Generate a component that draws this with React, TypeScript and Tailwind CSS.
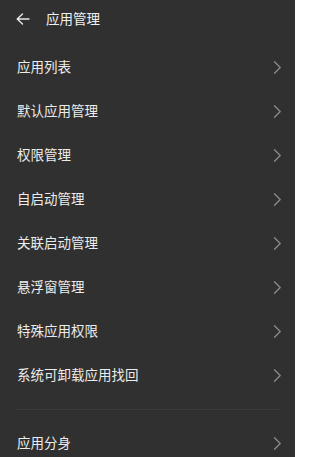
import React from "react";

const items1 = [
  "应用列表",
  "默认应用管理",
  "权限管理",
  "自启动管理",
  "关联启动管理",
  "悬浮窗管理",
  "特殊应用权限",
  "系统可卸载应用找回",
];

function Chevron() {
  return (
    <svg width="9" height="13" viewBox="0 0 9 13" fill="none">
      <path d="M1.5 0.8 L7.2 6.5 L1.5 12.2" stroke="#8a8a8a" strokeWidth="1.3" strokeLinecap="round" strokeLinejoin="round" />
    </svg>
  );
}

function Row({ label }: { label: string }) {
  return (
    <div className="flex h-[44px] items-center justify-between pl-[17px] pr-[13px]">
      <span className="text-[13.5px] leading-none text-[#ececec]">{label}</span>
      <Chevron />
    </div>
  );
}

export default function App() {
  return (
    <div
      className="h-[457px] w-[295px] overflow-hidden bg-[#303030]"
      style={{ fontFamily: '"Noto Sans CJK SC", "Noto Sans", sans-serif' }}
    >
      <div className="flex h-[38px] items-center pl-[16px]">
        <svg width="14" height="12" viewBox="0 0 14 12" fill="none">
          <path d="M13 6 H1.5 M6.5 1 L1.2 6 L6.5 11" stroke="#e8e8e8" strokeWidth="1.4" strokeLinecap="round" strokeLinejoin="round" />
        </svg>
        <span className="ml-[16px] text-[13.5px] leading-none text-[#f0f0f0]">应用管理</span>
      </div>
      <div className="pt-[7px]">
        {items1.map((t) => (
          <Row key={t} label={t} />
        ))}
        <div className="flex h-[24px] items-center px-[16px]">
          <div className="h-px w-full bg-[#3c3c3c]" />
        </div>
        <Row label="应用分身" />
      </div>
    </div>
  );
}
